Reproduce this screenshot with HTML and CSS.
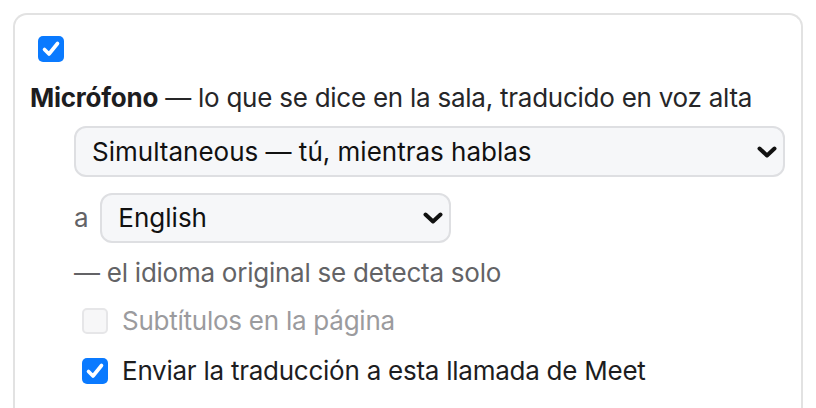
FILE: index.html
```html
<!DOCTYPE html>
<html lang="es">
<head>
<meta charset="utf-8">
<link rel="stylesheet" href="styles.css">
</head>
<body>
<div class="card">
  <span class="box checked"><svg viewBox="0 0 26 26" width="26" height="26"><path d="M6.5 13.5 L11 18 L19.5 7.5" fill="none" stroke="#fff" stroke-width="3.6" stroke-linecap="round" stroke-linejoin="round"/></svg></span>
  <p class="title"><b>Micrófono</b> — lo que se dice en la sala, traducido en voz alta</p>
  <div class="indent">
    <div class="select wide">
      <select><option>Simultaneous — tú, mientras hablas</option></select>
      <svg class="chev" viewBox="0 0 20 12" width="20" height="12"><path d="M2.5 2.5 L10 9.5 L17.5 2.5" fill="none" stroke="#111" stroke-width="4" stroke-linecap="round" stroke-linejoin="round"/></svg>
    </div>
    <div class="to-row">
      <span class="muted">a</span>
      <div class="select narrow">
        <select><option>English</option></select>
        <svg class="chev" viewBox="0 0 20 12" width="20" height="12"><path d="M2.5 2.5 L10 9.5 L17.5 2.5" fill="none" stroke="#111" stroke-width="4" stroke-linecap="round" stroke-linejoin="round"/></svg>
      </div>
    </div>
    <p class="muted note">— el idioma original se detecta solo</p>
    <label class="opt disabled"><span class="box"></span>Subtítulos en la página</label>
    <label class="opt"><span class="box checked"><svg viewBox="0 0 26 26" width="26" height="26"><path d="M6.5 13.5 L11 18 L19.5 7.5" fill="none" stroke="#fff" stroke-width="3.6" stroke-linecap="round" stroke-linejoin="round"/></svg></span>Enviar la traducción a esta llamada de Meet</label>
  </div>
</div>
</body>
</html>
```
FILE: styles.css
```css
html, body {
  margin: 0;
  padding: 0;
  background: #fff;
}
body {
  font-family: Inter, "Noto Sans", sans-serif;
  font-size: 26px;
  line-height: 32px;
  letter-spacing: -0.25px;
  color: #1d1d1f;
  overflow: hidden;
}
.card {
  margin: 13px 13px 0 13px;
  border: 2px solid #e2e2e2;
  border-bottom: none;
  border-radius: 14px 14px 0 0;
  padding: 21px 15px 40px 15px;
}
.box {
  display: inline-flex;
  width: 26px;
  height: 26px;
  border-radius: 5px;
  box-sizing: border-box;
  flex: none;
}
.box.checked {
  background: #0a7aff;
}
.card > .box {
  display: flex;
  margin: 0 0 20px 8px;
}
.title {
  margin: 0;
  color: #262628;
}
.title b {
  color: #1d1d1f;
  font-weight: 700;
}
.indent {
  padding-left: 44px;
}
.select {
  position: relative;
}
.select select {
  appearance: none;
  -webkit-appearance: none;
  display: block;
  width: 100%;
  box-sizing: border-box;
  font: inherit;
  color: #111;
  background: #f6f7f9;
  border: 2px solid #dedfe2;
  border-radius: 12px;
  padding: 0 40px 0 16px;
  outline: none;
}
.select .chev {
  position: absolute;
  top: 50%;
  right: 8px;
  margin-top: -6px;
  pointer-events: none;
}
.select.wide {
  margin-top: 12px;
  width: 711px;
}
.select.wide select {
  height: 51px;
}
.to-row {
  display: flex;
  align-items: center;
  gap: 12px;
  margin-top: 16px;
}
.select.narrow {
  width: 351px;
}
.select.narrow select {
  height: 50px;
}
.muted {
  color: #636366;
}
.note {
  margin: 14px 0 0 0;
}
.opt {
  display: flex;
  align-items: center;
  gap: 14px;
  margin-left: 8px;
  margin-top: 16px;
}
.opt + .opt {
  margin-top: 18px;
}
.opt.disabled {
  color: #9b9b9e;
}
.opt.disabled .box {
  background: #f7f7f8;
  border: 2px solid #e6e6e8;
}
```
